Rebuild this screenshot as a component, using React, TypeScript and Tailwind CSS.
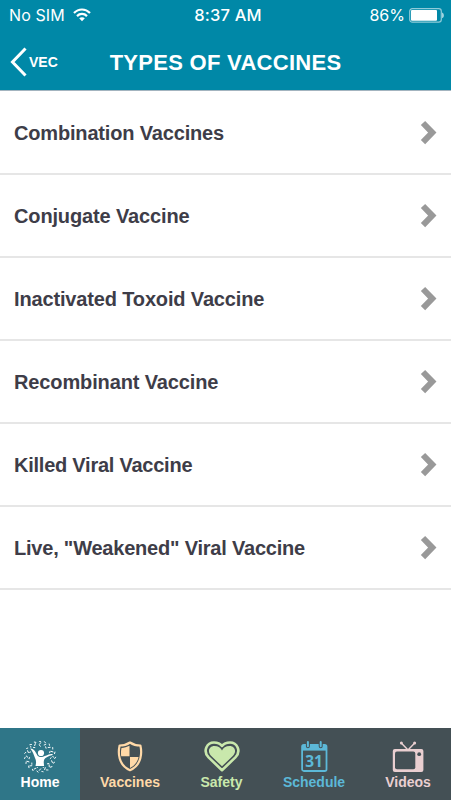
import React from 'react';
import clsx from 'clsx';

interface VaccineType {
  id: string;
  label: string;
  textClass: string;
}

interface TabProps {
  label: string;
  icon: React.ReactNode;
  className: string;
}

const vaccineTypes: VaccineType[] = [
  { id: 'combination', label: 'Combination Vaccines', textClass: 'tracking-[-0.17px]' },
  { id: 'conjugate', label: 'Conjugate Vaccine', textClass: 'tracking-[-0.14px]' },
  { id: 'toxoid', label: 'Inactivated Toxoid Vaccine', textClass: 'tracking-[-0.15px]' },
  { id: 'recombinant', label: 'Recombinant Vaccine', textClass: 'tracking-[-0.13px]' },
  { id: 'killed', label: 'Killed Viral Vaccine', textClass: 'tracking-[-0.24px]' },
  { id: 'live', label: 'Live, "Weakened" Viral Vaccine', textClass: 'tracking-[-0.21px]' },
];

const WifiIcon = () => (
  <svg width="18" height="14" viewBox="0 0 18 14" fill="none" stroke="currentColor" strokeWidth="2.2">
    <path d="M1 5.1C5.6.3 12.4.3 17 5.1" />
    <path d="M4 8.1c2.9-2.9 7.1-2.9 10 0" />
    <path d="M6.2 10.3c1.6-1.5 4-1.5 5.6 0L9 13.2z" fill="currentColor" stroke="none" />
  </svg>
);

const BatteryIcon = () => (
  <svg width="35" height="15" viewBox="0 0 35 15" fill="none">
    <rect x="0.7" y="0.7" width="31.6" height="13.4" rx="2.6" stroke="#8fcbd9" strokeWidth="1.2" />
    <rect x="2" y="2" width="26" height="10.8" rx="1" fill="white" />
    <path d="M33.2 4.6c2 .8 2 4.8 0 5.6z" fill="#c5e6ed" />
  </svg>
);

// Rings of slanted flecks around the figure
const rings = [
  { radius: 15.2, count: 19, length: 0.8, tilt: 30 },
  { radius: 13, count: 16, length: 1, tilt: -50 },
  { radius: 10.8, count: 11, length: 0.7, tilt: 40 },
];

const HomeIcon = () => (
  <svg width="34" height="32" viewBox="0 0 34 32" fill="none" stroke="currentColor">
    {rings.map((ring) =>
      Array.from({ length: ring.count }, (_, i) => (
        <path
          key={`${ring.radius}-${i}`}
          d={`M${-ring.length} 0H${ring.length}`}
          strokeWidth="0.9"
          strokeLinecap="round"
          transform={`rotate(${(360 / ring.count) * i} 17 15.6) translate(17 ${15.6 - ring.radius}) rotate(${ring.tilt})`}
        />
      ))
    )}
    <g fill="currentColor" stroke="#2f7688" strokeWidth="2" paintOrder="stroke">
      <path d="M7.2 7.6c2.9 0 4.4 1.6 5.7 4.2 1 2.3 2.6 3.7 5.1 3.8 4.3.1 6.5-2.1 10.3-2.6 1-.1 1.5.4 1.5 1-4.2 1-7.8 2.7-8.7 4.7-.6 1.900-.3 4.100 0 6.200h-8.600c.8-3.100.8-5.500-.5-8C10.700 14.200 9.800 10.200 7.200 7.600z" />
      <circle cx="18" cy="12" r="3.1" />
    </g>
  </svg>
);

const ShieldIcon = () => (
  <svg width="26" height="31" viewBox="0 0 26 31" fill="none">
    <path
      d="M13 1.5C9.6 3.8 5.8 4.5 2.6 4.5C1 11.5 1 24 13 29.2C25 24 25 11.5 23.4 4.5C20.2 4.5 16.4 3.8 13 1.5z"
      stroke="currentColor"
      strokeWidth="2.2"
      strokeLinejoin="round"
    />
    <path d="M12.5 4.7V15.2H4.2C3.8 12.5 3.9 9.5 4.5 6.9C7.2 6.7 9.9 6 12.5 4.7z" fill="currentColor" />
    <path d="M13 15.9H21.6C20.5 21 17.6 24.7 13 26.9z" fill="currentColor" />
  </svg>
);

const HeartIcon = () => (
  <svg width="36" height="31" viewBox="0 0 36 31" fill="none">
    <path
      d="M18 29.2L4.6 16.4C-1.6 9.8 3 1.5 10 1.5C13.6 1.5 16.5 3 18 5C19.5 3 22.4 1.5 26 1.5C33 1.5 37.6 9.8 31.4 16.4z"
      stroke="currentColor"
      strokeWidth="2.6"
      strokeLinejoin="round"
    />
    <path
      d="M18 25.3L7 14.8C2.8 10.2 5.6 5 10.3 5C14.2 5 17 6.8 18 9.5C19 6.8 21.8 5 25.7 5C30.4 5 33.2 10.2 29 14.8z"
      fill="currentColor"
    />
  </svg>
);

const CalendarIcon = () => (
  <svg width="27" height="31" viewBox="0 0 27 31" fill="none">
    <rect x="1.1" y="4" width="24.4" height="26" rx="1.8" stroke="currentColor" strokeWidth="1.8" />
    <path d="M1 4h24.6v5.6H1z" fill="currentColor" />
    <path d="M6.9 1v4.200M19.7 1v4.2" stroke="#445055" strokeWidth="4" strokeLinecap="round" />
    <path d="M6.9 1v4.200M19.7 1v4.2" stroke="currentColor" strokeWidth="2" strokeLinecap="round" />
    <text x="13" y="25.6" textAnchor="middle" fill="currentColor" fontSize="15.5" fontWeight="700" className="font-['Open_Sans',sans-serif]">
      31
    </text>
  </svg>
);

const TvIcon = () => (
  <svg width="32" height="32" viewBox="0 0 32 32" fill="none">
    <path d="M9.5 2.2L16 9L22.5 2.2" stroke="currentColor" strokeWidth="1.5" />
    <circle cx="9.4" cy="2.1" r="1.5" fill="currentColor" />
    <circle cx="22.6" cy="2.1" r="1.5" fill="currentColor" />
    <rect x="0.8" y="8" width="30.6" height="22.9" rx="2" fill="currentColor" />
    <rect x="3" y="10.6" width="20.3" height="17.7" rx="2" fill="#445055" />
    <circle cx="27.2" cy="13.2" r="1.9" fill="#445055" />
  </svg>
);

const Tab: React.FC<TabProps> = ({ label, icon, className }) => (
  <button className={clsx('flex flex-col items-center pt-[13px]', className)}>
    <span className="flex h-8 items-start">{icon}</span>
    <span className="whitespace-nowrap text-[14px] leading-[18px] font-bold">{label}</span>
  </button>
);

const StatusBar = () => (
  <div className="grid h-[30px] grid-cols-3 items-center font-['Inter',sans-serif] text-[16px] leading-5">
    <div className="flex items-center gap-2 pl-[9px]">
      <span className="tracking-[0.1px]">No SIM</span>
      <WifiIcon />
    </div>
    <div className="pl-[5px] text-center text-[16.5px] font-medium tracking-[0.2px]">8:37 AM</div>
    <div className="flex items-center justify-end gap-1 pr-[7px]">
      <span>86%</span>
      <BatteryIcon />
    </div>
  </div>
);

const Header = () => (
  <header className="h-[91px] border-b border-[#a3b4bf] bg-[#0088a7] text-white">
    <StatusBar />
    <div className="grid h-[60px] grid-cols-[100px_1fr_100px] items-center pt-1">
      <button className="flex items-center gap-[2px] pl-2.5">
        <svg width="17" height="30" viewBox="0 0 17 30" fill="none" stroke="currentColor" strokeWidth="3">
          <path d="M15.5 1.5L2.5 15L15.5 28.5" />
        </svg>
        <span className="text-[14px] font-bold">VEC</span>
      </button>
      <h1 className="whitespace-nowrap text-center text-[22px] font-bold tracking-[0.28px]">TYPES OF VACCINES</h1>
    </div>
  </header>
);

const App: React.FC = () => (
  <div className="flex h-[800px] w-[451px] flex-col overflow-hidden bg-white font-['Liberation_Sans',Arial,sans-serif]">
    <Header />
    <ul className="flex-1 pt-px">
      {vaccineTypes.map((item) => (
        <li key={item.id} className="flex h-[83px] items-center justify-between border-b-2 border-[#e6e6e6] pl-3.5 pr-[13px]">
          <span className={clsx('whitespace-nowrap text-[20px] font-bold text-[#3e3d48]', item.textClass)}>
            {item.label}
          </span>
          <svg width="18" height="26" viewBox="0 0 18 26" fill="none" stroke="#999999" strokeWidth="6">
            <path d="M3 3L12.3 12.6L3 22.2" />
          </svg>
        </li>
      ))}
    </ul>
    <nav className="flex h-[72px] bg-[#445055]">
      <Tab label="Home" icon={<HomeIcon />} className="w-20 bg-[#2f7688] text-white" />
      <Tab label="Vaccines" icon={<ShieldIcon />} className="w-[100px] text-[#ffd9a8]" />
      <Tab label="Safety" icon={<HeartIcon />} className="w-[83px] text-[#c9e8ac]" />
      <Tab label="Schedule" icon={<CalendarIcon />} className="w-[102px] text-[#5cb8d8]" />
      <Tab label="Videos" icon={<TvIcon />} className="w-[86px] text-[#eacfd1]" />
    </nav>
  </div>
);

export default App;
